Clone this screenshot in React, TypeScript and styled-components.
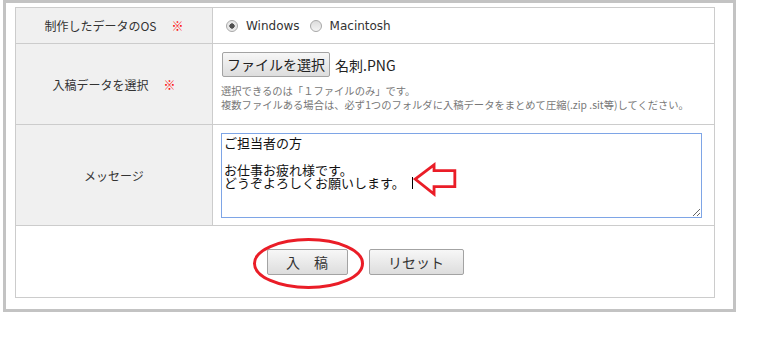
import React from "react";
import styled, { createGlobalStyle } from "styled-components";

const GlobalStyle = createGlobalStyle`
  body {
    margin: 0;
    background: #fff;
    font-family: "Noto Sans CJK JP", "DejaVu Sans", sans-serif;
    color: #333;
  }
`;

const Frame = styled.div`
  margin-left: 3px;
  width: 733px;
  box-sizing: border-box;
  border: 3px solid #c3c3c3;
  padding: 4px 18px 11px 9px;
  background: #fff;
`;

const FormTable = styled.table`
  width: 700px;
  border-collapse: collapse;
  border: 1px solid #ccc;
`;

const Label = styled.th<{ $h: number }>`
  width: 196px;
  height: ${(p) => p.$h}px;
  padding: 0;
  background: #f0f0f0;
  border: 1px solid #ccc;
  font-size: 12px;
  font-weight: normal;
  color: #333;
  text-align: center;
  vertical-align: middle;
`;

const Required = styled.span`
  color: #ff0000;
  margin-left: 15px;
  font-size: 12px;
`;

const Cell = styled.td`
  border: 1px solid #ccc;
  padding: 0 8px;
  vertical-align: middle;
`;

const TopCell = styled(Cell)`
  vertical-align: top;
  padding-top: 8px;
`;

const ButtonCell = styled.td`
  border: 1px solid #ccc;
  height: 71px;
  padding: 0;
  text-align: center;
  vertical-align: middle;
`;

const RadioGroup = styled.div`
  display: flex;
  align-items: center;
  padding-left: 5px;
  font-family: "DejaVu Sans", sans-serif;
  font-size: 12px;
  color: #333;
`;

const RadioLabel = styled.label`
  display: flex;
  align-items: center;
  margin-right: 10px;
`;

const Radio = styled.input.attrs({ type: "radio" })`
  appearance: none;
  width: 12px;
  height: 12px;
  margin: 0 8px 0 0;
  border: 1px solid #a9a9a9;
  border-radius: 50%;
  box-sizing: border-box;
  background: linear-gradient(#dcdcdc, #f4f4f4);

  &:checked {
    background: radial-gradient(circle, #4f4f4f 0 2.4px, #e4e4e4 2.9px, #f2f2f2 100%);
  }
`;

const FileRow = styled.div`
  display: flex;
  align-items: center;
  gap: 5px;
  margin-left: 1px;
`;

const PlainButton = styled.button`
  font-family: "Noto Sans CJK JP", sans-serif;
  color: #222;
  background: linear-gradient(#f7f7f7, #dddddd);
  border: 1px solid #a3a3a3;
  border-radius: 2px;
  padding: 0;
  cursor: pointer;
`;

const FileButton = styled(PlainButton)`
  height: 25px;
  width: 108px;
  font-size: 14px;
  line-height: 23px;
`;

const FileName = styled.span`
  font-size: 14px;
  color: #222;
`;

const Notes = styled.div`
  margin-top: 7px;
  font-size: 10.3px;
  line-height: 14px;
  color: #777;
`;

const AreaWrap = styled.div`
  position: relative;
  width: 481px;
  height: 85px;
`;

const MessageArea = styled.textarea`
  width: 481px;
  height: 85px;
  box-sizing: border-box;
  border: 1px solid #7ea5e6;
  outline: none;
  padding: 2px;
  margin: 0;
  font-family: "Noto Sans CJK JP", monospace;
  font-size: 13px;
  line-height: 13.5px;
  color: #111;
  resize: both;
  display: block;
`;

const Caret = styled.span`
  position: absolute;
  left: 191px;
  top: 44px;
  width: 1px;
  height: 12px;
  background: #000;
`;

const Overlay = styled.svg`
  position: absolute;
  pointer-events: none;
  overflow: visible;
`;

const Buttons = styled.div`
  display: inline-flex;
  gap: 21px;
  align-items: center;
`;

const SubmitWrap = styled.div`
  position: relative;
`;

const ActionButton = styled(PlainButton)<{ $w: number }>`
  width: ${(p) => p.$w}px;
  height: 26px;
  font-size: 14px;
  color: #333;
`;

export default function App() {
  return (
    <>
      <GlobalStyle />
      <Frame>
        <FormTable>
          <tbody>
            <tr>
              <Label $h={35}>
                制作したデータのOS<Required>※</Required>
              </Label>
              <Cell>
                <RadioGroup>
                  <RadioLabel>
                    <Radio name="os" defaultChecked />
                    Windows
                  </RadioLabel>
                  <RadioLabel>
                    <Radio name="os" />
                    Macintosh
                  </RadioLabel>
                </RadioGroup>
              </Cell>
            </tr>
            <tr>
              <Label $h={80}>
                入稿データを選択<Required>※</Required>
              </Label>
              <TopCell>
                <FileRow>
                  <FileButton type="button">ファイルを選択</FileButton>
                  <FileName>名刺.PNG</FileName>
                </FileRow>
                <Notes>
                  選択できるのは「１ファイルのみ」です。
                  <br />
                  複数ファイルある場合は、必ず1つのフォルダに入稿データをまとめて圧縮(.zip .sit等)してください。
                </Notes>
              </TopCell>
            </tr>
            <tr>
              <Label $h={100}>メッセージ</Label>
              <Cell>
                <AreaWrap>
                  <MessageArea
                    defaultValue={
                      "ご担当者の方\n\nお仕事お疲れ様です。\nどうぞよろしくお願いします。"
                    }
                  />
                  <Caret />
                  <Overlay
                    width="44"
                    height="34"
                    viewBox="192 30 46 36"
                    style={{ left: 192, top: 30 }}
                  >
                    <polygon
                      points="194,47 214,32 214,38 236,38 236,55 214,55 214,63"
                      fill="none"
                      stroke="#ea1d27"
                      strokeWidth="3"
                      strokeLinejoin="miter"
                    />
                  </Overlay>
                </AreaWrap>
              </Cell>
            </tr>
            <tr>
              <ButtonCell colSpan={2}>
                <Buttons>
                  <SubmitWrap>
                    <ActionButton $w={81} type="submit">
                      入　稿
                    </ActionButton>
                    <Overlay
                      width="113"
                      height="53"
                      style={{ left: -15, top: -12 }}
                    >
                      <ellipse
                        cx="56.5"
                        cy="26.5"
                        rx="54"
                        ry="24"
                        fill="none"
                        stroke="#ea1d27"
                        strokeWidth="3"
                      />
                    </Overlay>
                  </SubmitWrap>
                  <ActionButton $w={95} type="reset">
                    リセット
                  </ActionButton>
                </Buttons>
              </ButtonCell>
            </tr>
          </tbody>
        </FormTable>
      </Frame>
    </>
  );
}
